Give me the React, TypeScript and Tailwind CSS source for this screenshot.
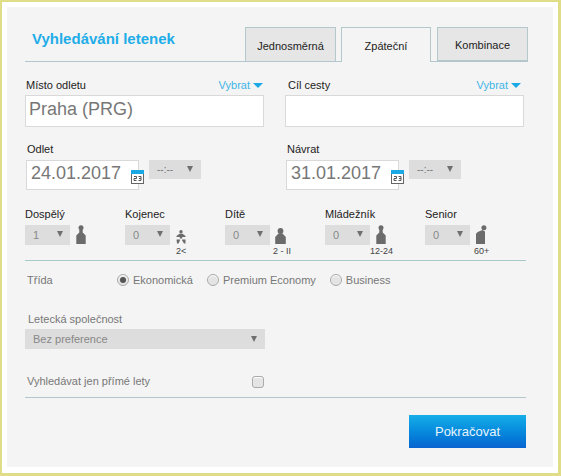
const font = "font-['Liberation_Sans',Arial,sans-serif]";

const Arrow = ({ className = "" }: { className?: string }) => (
  <svg width="6" height="6" viewBox="0 0 6 6" className={className}>
    <path d="M0 0h6L3 6z" fill="#6f6f6f" />
  </svg>
);

const Vybrat = ({ className = "" }: { className?: string }) => (
  <span className={`flex items-center text-[11px] text-[#3fb4e6] ${className}`}>
    Vybrat
    <svg width="10" height="5" viewBox="0 0 10 5" className="ml-[3px]">
      <path d="M0 0h10L5 5z" fill="#1ba9e6" />
    </svg>
  </span>
);

const Calendar = () => (
  <svg width="13" height="14" viewBox="0 0 13 14" className="absolute top-[9px] left-[104px]">
    <rect x="0.5" y="0.5" width="12" height="13" fill="#fff" stroke="#666" />
    <rect x="0" y="0" width="13" height="4" fill="#1ba9e6" />
    <path d="M3 6.500h2.500v2H3v2h2.500M7.500 6.500H10v4H7.500M8 8.500h2" fill="none" stroke="#555" strokeWidth="1" />
  </svg>
);

const DateField = ({ label, value }: { label: string; value: string }) => (
  <div className="w-[260px] shrink-0">
    <div className="ml-[2px] h-[11px] text-[11px] leading-[11px] text-[#222]">{label}</div>
    <div className="mt-[5px] flex items-start">
      <div className="relative ml-px h-[30px] w-[113px] border border-[#d9d9d9] bg-white pl-[4px] text-[18px] leading-[24px] text-[#777]">
        {value}
        <Calendar />
      </div>
      <div className="ml-[10px] flex h-[19px] w-[52px] items-start justify-between bg-[#dddddd] pt-[3px] pr-[8px] pl-[8px] text-[10px] leading-[13px] text-[#777]">
        --:--
        <Arrow className="mt-[3px]" />
      </div>
    </div>
  </div>
);

const Adult = () => (
  <svg width="11" height="19" viewBox="0 0 11 19">
    <circle cx="6" cy="2.700" r="2.500" fill="#6b6b6b" />
    <path d="M4.300 5h3.400v2.500l3 3V19H1.300v-8.500l3-3z" fill="#6b6b6b" />
  </svg>
);

const Child = () => (
  <svg width="11" height="16" viewBox="0 0 11 16">
    <circle cx="5.500" cy="3" r="2.900" fill="#6b6b6b" />
    <path d="M3.500 5.500h4L10.800 9v7H.2V9z" fill="#6b6b6b" />
  </svg>
);

const Infant = () => (
  <svg width="10" height="14" viewBox="0 0 10 14">
    <circle cx="5" cy="1.800" r="1.700" fill="#6b6b6b" />
    <path d="M3.500 3.800h3L9.500 6v1H.5V6zM3.800 7h2.400v1.500H3.800zM.5 9.500h3.500v.8L2.500 13.500H1zM6 9.500h3.500v4H8l-2-3.200z" fill="#6b6b6b" />
  </svg>
);

const Senior = () => (
  <svg width="12" height="19" viewBox="0 0 12 19">
    <circle cx="8.900" cy="2.700" r="2.500" fill="#6b6b6b" />
    <path d="M7.500 5l2.500 1.500V19H1v-9.500C1 7.500 4 6.500 7.500 5z" fill="#6b6b6b" />
  </svg>
);

const Passenger = ({
  label,
  value,
  icon,
  age,
  ageClass = "",
  iconClass = "",
}: {
  label: string;
  value: string;
  icon: React.ReactNode;
  age?: string;
  ageClass?: string;
  iconClass?: string;
}) => (
  <div className="w-[100px] shrink-0">
    <div className="h-[11px] text-[11px] leading-[11px] text-[#222]">{label}</div>
    <div className="mt-[5px] flex items-start">
      <div className="flex h-[20px] w-[45px] items-center justify-between bg-[#dddddd] pr-[7px] pl-[8px] text-[11px] text-[#888]">
        {value}
        <Arrow className="mb-[2px]" />
      </div>
      <div className={`relative ml-[5px] ${iconClass}`}>
        {icon}
        {age && (
          <span className={`absolute whitespace-nowrap text-[9px] leading-[11px] text-[#444] ${ageClass}`}>{age}</span>
        )}
      </div>
    </div>
  </div>
);

const Radio = ({ label, checked = false, className = "" }: { label: string; checked?: boolean; className?: string }) => (
  <span className={`flex items-center ${className}`}>
    <span className="flex h-[12px] w-[12px] items-center justify-center rounded-full border border-[#aaa] bg-[#e4e4e4] shadow-[inset_0_1px_1px_#fff]">
      {checked && <span className="h-[6px] w-[6px] rounded-full bg-[#555]" />}
    </span>
    <span className="ml-[4px] text-[11px] text-[#777]">{label}</span>
  </span>
);

export default function App() {
  return (
    <div className={`${font} h-[476px] w-[561px] border-t-2 border-r-[3px] border-b-[3px] border-l-2 border-[#e0dd88] bg-white pt-[5px] pr-[5px] pb-[6px] pl-[5px]`}>
      <div className="h-full bg-[#f4f4f4] pr-[27px] pl-[18px]">
        {/* header + tabs */}
        <div className="mr-[-2px] flex h-[55px] items-start border-b border-[#b4c5cb] pt-[20px]">
          <h1 className="mt-[3px] ml-[7px] flex-1 text-[15px] leading-[17px] font-bold text-[#22ade8]">Vyhledávání letenek</h1>
          <div className="flex items-start text-[11px] text-[#222]">
            <div className="flex h-[34px] w-[91px] items-center justify-center border border-b-0 border-[#b4c8cb] bg-[#e6e6e6] pt-[3px]">Jednosměrná</div>
            <div className="relative z-10 ml-[5px] flex h-[35px] w-[90px] items-center justify-center border border-b-0 border-[#b4c8cb] bg-[#f4f4f4] pt-[2px]">Zpáteční</div>
            <div className="ml-[6px] flex h-[34px] w-[91px] items-center justify-center border border-[#b4c8cb] bg-[#e6e6e6] pt-[2px]">Kombinace</div>
          </div>
        </div>

        {/* origin / destination */}
        <div className="mt-[18px] flex gap-[21px]">
          <div className="w-[239px]">
            <div className="flex h-[11px] items-center justify-between leading-[11px]">
              <span className="ml-px text-[11px] text-[#222]">Místo odletu</span>
              <Vybrat className="mr-px" />
            </div>
            <div className="mt-[4px] h-[32px] border border-[#d9d9d9] bg-white pl-[3px] text-[18px] leading-[26px] text-[#777]">Praha (PRG)</div>
          </div>
          <div className="w-[239px]">
            <div className="flex h-[11px] items-center justify-between leading-[11px]">
              <span className="ml-[3px] text-[11px] text-[#222]">Cíl cesty</span>
              <Vybrat className="mr-[3px]" />
            </div>
            <div className="mt-[4px] h-[32px] border border-[#d9d9d9] bg-white" />
          </div>
        </div>

        {/* dates */}
        <div className="mt-[17px] flex">
          <DateField label="Odlet" value="24.01.2017" />
          <DateField label="Návrat" value="31.01.2017" />
        </div>

        {/* passengers */}
        <div className="mt-[19px] flex h-[52px] border-b border-[#a9c9c9]">
          <Passenger label="Dospělý" value="1" icon={<Adult />} />
          <Passenger label="Kojenec" value="0" icon={<Infant />} iconClass="mt-[5px] pl-px" age="2<" ageClass="top-[16px] left-px" />
          <Passenger label="Dítě" value="0" icon={<Child />} iconClass="mt-[3px]" age="2 - II" ageClass="top-[18px] left-[-2px]" />
          <Passenger label="Mládežník" value="0" icon={<Adult />} age="12-24" ageClass="top-[21px] left-[-5px]" />
          <Passenger label="Senior" value="0" icon={<Senior />} age="60+" ageClass="top-[21px] left-[-1px]" />
        </div>

        {/* class */}
        <div className="mt-[12px] flex h-[14px] items-center text-[11px]">
          <span className="ml-[2px] w-[90px] text-[#777]">Třída</span>
          <Radio label="Ekonomická" checked />
          <Radio label="Premium Economy" className="ml-[14px]" />
          <Radio label="Business" className="ml-[14px]" />
        </div>

        {/* airline */}
        <div className="mt-[26px] ml-[3px] h-[13px] text-[11px] leading-[13px] text-[#777]">Letecká společnost</div>
        <div className="mt-[3px] flex h-[20px] w-[240px] items-center justify-between bg-[#dddddd] pr-[8px] pl-[8px] text-[11px] text-[#888]">
          Bez preference
          <Arrow />
        </div>

        {/* direct flights */}
        <div className="mt-[25px] flex h-[24px] w-full items-start border-b border-[#b4c5cb]">
          <div className="flex w-[239px] items-start justify-between pl-[2px]">
            <span className="text-[11px] leading-[14px] text-[#777]">Vyhledávat jen přímé lety</span>
            <span className="mt-[2px] h-[12px] w-[12px] rounded-[3px] border border-[#aaa] bg-[#e4e4e4] shadow-[inset_0_1px_1px_#fff]" />
          </div>
        </div>

        <div className="mt-[17px] flex justify-end">
          <button className="h-[33px] w-[117px] bg-gradient-to-b from-[#17aee8] to-[#0a64d0] text-[13px] text-[#e8f4fc]">Pokračovat</button>
        </div>
      </div>
    </div>
  );
}
